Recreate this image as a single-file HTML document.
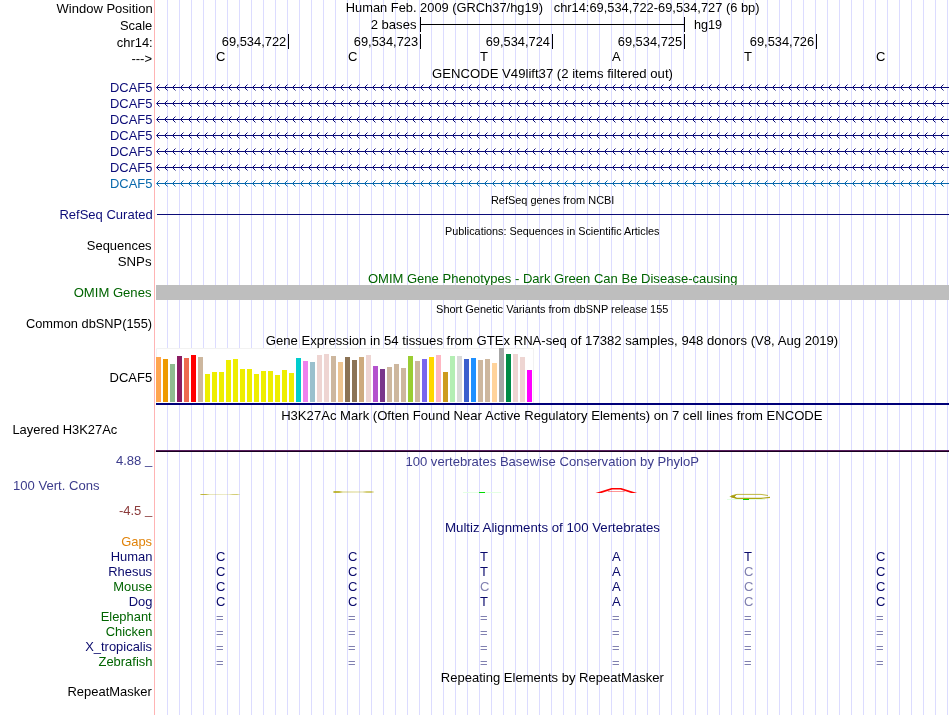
<!DOCTYPE html>
<html lang="en"><head><meta charset="utf-8"><title>UCSC Genome Browser chr14:69,534,722-69,534,727</title>
<style>
html,body{margin:0;padding:0;background:#fff;}
body{width:950px;height:715px;overflow:hidden;}
svg{display:block;font-family:"Liberation Sans", Arial, Helvetica, sans-serif;}
</style></head><body>
<div style="will-change:transform;width:950px;height:715px">
<svg width="950" height="715" viewBox="0 0 950 715">
<defs>
<pattern id="guides" x="167" y="0" width="12" height="715" patternUnits="userSpaceOnUse"><rect x="0" y="0" width="1" height="715" fill="#DCDCFF"/></pattern>
<pattern id="chev0" x="156" y="80" width="8" height="16" patternUnits="userSpaceOnUse"><path d="M3.5 4.5L0.5 7.5L3.5 10.5" fill="none" stroke="#0C0C78" stroke-width="1"/></pattern>
<pattern id="chev1" x="156" y="80" width="8" height="16" patternUnits="userSpaceOnUse"><path d="M3.5 4.5L0.5 7.5L3.5 10.5" fill="none" stroke="#0868AC" stroke-width="1"/></pattern>
<linearGradient id="cg" x1="0" x2="1" y1="0" y2="0"><stop offset="0" stop-color="#B4AA14" stop-opacity="0.3"/><stop offset="0.04" stop-color="#B4AA14" stop-opacity="0.85"/><stop offset="0.15" stop-color="#B4AA14" stop-opacity="0.8"/><stop offset="0.24" stop-color="#B4AA14" stop-opacity="0.3"/><stop offset="0.72" stop-color="#B4AA14" stop-opacity="0.22"/><stop offset="0.82" stop-color="#B4AA14" stop-opacity="0.55"/><stop offset="0.93" stop-color="#B4AA14" stop-opacity="0.6"/><stop offset="1" stop-color="#B4AA14" stop-opacity="0.15"/></linearGradient>
</defs>
<rect x="0" y="0" width="950" height="715" fill="#fff"/>
<rect x="167" y="0" width="783" height="715" fill="url(#guides)"/>
<rect x="154" y="0" width="1" height="715" fill="#FFB4B4"/>
<text x="56.54" y="13" text-anchor="start" fill="#000" font-size="13.58" textLength="96.2" lengthAdjust="spacingAndGlyphs">Window Position</text>
<text x="119.92" y="30" text-anchor="start" fill="#000" font-size="13.58" textLength="32.36" lengthAdjust="spacingAndGlyphs">Scale</text>
<text x="116.73" y="47" text-anchor="start" fill="#000" font-size="13.58" textLength="35.96" lengthAdjust="spacingAndGlyphs">chr14:</text>
<text x="152" y="63" text-anchor="end" fill="#000" font-size="13.58" textLength="20.59" lengthAdjust="spacingAndGlyphs">---&gt;</text>
<text x="345.83" y="12" text-anchor="start" fill="#000" font-size="13.58" textLength="413.67" lengthAdjust="spacingAndGlyphs" xml:space="preserve">Human Feb. 2009 (GRCh37/hg19)   chr14:69,534,722-69,534,727 (6 bp)</text>
<text x="370.65" y="29" text-anchor="start" fill="#000" font-size="13.58" textLength="45.82" lengthAdjust="spacingAndGlyphs">2 bases</text>
<text x="693.9" y="29" text-anchor="start" fill="#000" font-size="13.58" textLength="28.12" lengthAdjust="spacingAndGlyphs">hg19</text>
<rect x="420" y="17" width="1" height="15" fill="#000"/>
<rect x="684" y="17" width="1" height="15" fill="#000"/>
<rect x="420" y="24" width="265" height="1" fill="#000"/>
<rect x="288" y="34" width="1" height="15" fill="#000"/>
<text x="221.74" y="46" text-anchor="start" fill="#000" font-size="13.58" textLength="64.51" lengthAdjust="spacingAndGlyphs">69,534,722</text>
<rect x="420" y="34" width="1" height="15" fill="#000"/>
<text x="353.74" y="46" text-anchor="start" fill="#000" font-size="13.58" textLength="64.43" lengthAdjust="spacingAndGlyphs">69,534,723</text>
<rect x="552" y="34" width="1" height="15" fill="#000"/>
<text x="485.74" y="46" text-anchor="start" fill="#000" font-size="13.58" textLength="64.24" lengthAdjust="spacingAndGlyphs">69,534,724</text>
<rect x="684" y="34" width="1" height="15" fill="#000"/>
<text x="617.74" y="46" text-anchor="start" fill="#000" font-size="13.58" textLength="64.41" lengthAdjust="spacingAndGlyphs">69,534,725</text>
<rect x="816" y="34" width="1" height="15" fill="#000"/>
<text x="749.74" y="46" text-anchor="start" fill="#000" font-size="13.58" textLength="64.43" lengthAdjust="spacingAndGlyphs">69,534,726</text>
<text x="216" y="61" text-anchor="start" fill="#000" font-size="13.58" textLength="9.39" lengthAdjust="spacingAndGlyphs">C</text>
<text x="348" y="61" text-anchor="start" fill="#000" font-size="13.58" textLength="9.39" lengthAdjust="spacingAndGlyphs">C</text>
<text x="480" y="61" text-anchor="start" fill="#000" font-size="13.58" textLength="7.95" lengthAdjust="spacingAndGlyphs">T</text>
<text x="612" y="61" text-anchor="start" fill="#000" font-size="13.58" textLength="8.67" lengthAdjust="spacingAndGlyphs">A</text>
<text x="744" y="61" text-anchor="start" fill="#000" font-size="13.58" textLength="7.95" lengthAdjust="spacingAndGlyphs">T</text>
<text x="876" y="61" text-anchor="start" fill="#000" font-size="13.58" textLength="9.39" lengthAdjust="spacingAndGlyphs">C</text>
<text x="432.05" y="78" text-anchor="start" fill="#000" font-size="13.58" textLength="240.86" lengthAdjust="spacingAndGlyphs">GENCODE V49lift37 (2 items filtered out)</text>
<text x="109.98" y="92" text-anchor="start" fill="#0C0C78" font-size="13.58" textLength="42.36" lengthAdjust="spacingAndGlyphs">DCAF5</text>
<rect x="157" y="87" width="792" height="1" fill="#0C0C78"/>
<rect x="156" y="84" width="792" height="7" fill="url(#chev0)"/>
<text x="109.98" y="108" text-anchor="start" fill="#0C0C78" font-size="13.58" textLength="42.36" lengthAdjust="spacingAndGlyphs">DCAF5</text>
<rect x="157" y="103" width="792" height="1" fill="#0C0C78"/>
<rect x="156" y="100" width="792" height="7" fill="url(#chev0)"/>
<text x="109.98" y="124" text-anchor="start" fill="#0C0C78" font-size="13.58" textLength="42.36" lengthAdjust="spacingAndGlyphs">DCAF5</text>
<rect x="157" y="119" width="792" height="1" fill="#0C0C78"/>
<rect x="156" y="116" width="792" height="7" fill="url(#chev0)"/>
<text x="109.98" y="140" text-anchor="start" fill="#0C0C78" font-size="13.58" textLength="42.36" lengthAdjust="spacingAndGlyphs">DCAF5</text>
<rect x="157" y="135" width="792" height="1" fill="#0C0C78"/>
<rect x="156" y="132" width="792" height="7" fill="url(#chev0)"/>
<text x="109.98" y="156" text-anchor="start" fill="#0C0C78" font-size="13.58" textLength="42.36" lengthAdjust="spacingAndGlyphs">DCAF5</text>
<rect x="157" y="151" width="792" height="1" fill="#0C0C78"/>
<rect x="156" y="148" width="792" height="7" fill="url(#chev0)"/>
<text x="109.98" y="172" text-anchor="start" fill="#0C0C78" font-size="13.58" textLength="42.36" lengthAdjust="spacingAndGlyphs">DCAF5</text>
<rect x="157" y="167" width="792" height="1" fill="#0C0C78"/>
<rect x="156" y="164" width="792" height="7" fill="url(#chev0)"/>
<text x="109.98" y="188" text-anchor="start" fill="#0868AC" font-size="13.58" textLength="42.36" lengthAdjust="spacingAndGlyphs">DCAF5</text>
<rect x="157" y="183" width="792" height="1" fill="#0868AC"/>
<rect x="156" y="180" width="792" height="7" fill="url(#chev1)"/>
<text x="490.9" y="204" text-anchor="start" fill="#000" font-size="11.49" textLength="123.52" lengthAdjust="spacingAndGlyphs">RefSeq genes from NCBI</text>
<text x="59.43" y="219" text-anchor="start" fill="#0C0C78" font-size="13.58" textLength="93.3" lengthAdjust="spacingAndGlyphs">RefSeq Curated</text>
<rect x="157" y="214" width="792" height="1" fill="#0C0C78"/>
<text x="445.1" y="235" text-anchor="start" fill="#000" font-size="11.49" textLength="214.4" lengthAdjust="spacingAndGlyphs">Publications: Sequences in Scientific Articles</text>
<text x="86.81" y="250" text-anchor="start" fill="#000" font-size="13.58" textLength="64.76" lengthAdjust="spacingAndGlyphs">Sequences</text>
<text x="117.71" y="266" text-anchor="start" fill="#000" font-size="13.58" textLength="33.86" lengthAdjust="spacingAndGlyphs">SNPs</text>
<text x="367.88" y="283" text-anchor="start" fill="#006400" font-size="13.58" textLength="369.55" lengthAdjust="spacingAndGlyphs">OMIM Gene Phenotypes - Dark Green Can Be Disease-causing</text>
<text x="73.68" y="297" text-anchor="start" fill="#006400" font-size="13.58" textLength="77.79" lengthAdjust="spacingAndGlyphs">OMIM Genes</text>
<rect x="156" y="285" width="793" height="15" fill="#BEBEBE"/>
<text x="436.1" y="313" text-anchor="start" fill="#000" font-size="11.49" textLength="232.26" lengthAdjust="spacingAndGlyphs">Short Genetic Variants from dbSNP release 155</text>
<text x="25.94" y="328" text-anchor="start" fill="#000" font-size="13.58" textLength="126.17" lengthAdjust="spacingAndGlyphs">Common dbSNP(155)</text>
<text x="265.75" y="345" text-anchor="start" fill="#000" font-size="13.58" textLength="572.46" lengthAdjust="spacingAndGlyphs">Gene Expression in 54 tissues from GTEx RNA-seq of 17382 samples, 948 donors (V8, Aug 2019)</text>
<text x="109.53" y="382" text-anchor="start" fill="#000" font-size="13.58" textLength="42.61" lengthAdjust="spacingAndGlyphs">DCAF5</text>
<rect x="156" y="348" width="378" height="55" fill="#FFFFFF"/>
<path d="M156.5 403V348.5H533.5V403" fill="none" stroke="#F2F2F2" stroke-width="1"/>
<rect x="156" y="357" width="5" height="45" fill="#FFA54F"/>
<rect x="163" y="359" width="5" height="43" fill="#EE9A00"/>
<rect x="170" y="364" width="5" height="38" fill="#8FBC8F"/>
<rect x="177" y="356" width="5" height="46" fill="#8B1C62"/>
<rect x="184" y="358" width="5" height="44" fill="#EE6A50"/>
<rect x="191" y="355" width="5" height="47" fill="#FF0000"/>
<rect x="198" y="357" width="5" height="45" fill="#CDB79E"/>
<rect x="205" y="374" width="5" height="28" fill="#EEEE00"/>
<rect x="212" y="372" width="5" height="30" fill="#EEEE00"/>
<rect x="219" y="372" width="5" height="30" fill="#EEEE00"/>
<rect x="226" y="360" width="5" height="42" fill="#EEEE00"/>
<rect x="233" y="359" width="5" height="43" fill="#EEEE00"/>
<rect x="240" y="369" width="5" height="33" fill="#EEEE00"/>
<rect x="247" y="369" width="5" height="33" fill="#EEEE00"/>
<rect x="254" y="374" width="5" height="28" fill="#EEEE00"/>
<rect x="261" y="371" width="5" height="31" fill="#EEEE00"/>
<rect x="268" y="371" width="5" height="31" fill="#EEEE00"/>
<rect x="275" y="375" width="5" height="27" fill="#EEEE00"/>
<rect x="282" y="370" width="5" height="32" fill="#EEEE00"/>
<rect x="289" y="373" width="5" height="29" fill="#EEEE00"/>
<rect x="296" y="358" width="5" height="44" fill="#00CDCD"/>
<rect x="303" y="361" width="5" height="41" fill="#EE82EE"/>
<rect x="310" y="362" width="5" height="40" fill="#9AC0CD"/>
<rect x="317" y="355" width="5" height="47" fill="#EED5D2"/>
<rect x="324" y="354" width="5" height="48" fill="#EED5D2"/>
<rect x="331" y="356" width="5" height="46" fill="#CDB79E"/>
<rect x="338" y="362" width="5" height="40" fill="#EEC591"/>
<rect x="345" y="357" width="5" height="45" fill="#8B7355"/>
<rect x="352" y="360" width="5" height="42" fill="#8B7355"/>
<rect x="359" y="357" width="5" height="45" fill="#CDAA7D"/>
<rect x="366" y="355" width="5" height="47" fill="#EED5D2"/>
<rect x="373" y="366" width="5" height="36" fill="#B452CD"/>
<rect x="380" y="369" width="5" height="33" fill="#7A378B"/>
<rect x="387" y="367" width="5" height="35" fill="#CDB79E"/>
<rect x="394" y="364" width="5" height="38" fill="#CDB79E"/>
<rect x="401" y="368" width="5" height="34" fill="#CDB79E"/>
<rect x="408" y="356" width="5" height="46" fill="#9ACD32"/>
<rect x="415" y="361" width="5" height="41" fill="#CDB79E"/>
<rect x="422" y="359" width="5" height="43" fill="#7A67EE"/>
<rect x="429" y="357" width="5" height="45" fill="#FFD700"/>
<rect x="436" y="355" width="5" height="47" fill="#FFB6C1"/>
<rect x="443" y="372" width="5" height="30" fill="#CD9B1D"/>
<rect x="450" y="356" width="5" height="46" fill="#B4EEB4"/>
<rect x="457" y="356" width="5" height="46" fill="#D9D9D9"/>
<rect x="464" y="359" width="5" height="43" fill="#3A5FCD"/>
<rect x="471" y="358" width="5" height="44" fill="#1E90FF"/>
<rect x="478" y="360" width="5" height="42" fill="#CDB79E"/>
<rect x="485" y="359" width="5" height="43" fill="#CDB79E"/>
<rect x="492" y="363" width="5" height="39" fill="#FFD39B"/>
<rect x="499" y="348" width="5" height="54" fill="#A6A6A6"/>
<rect x="506" y="354" width="5" height="48" fill="#008B45"/>
<rect x="513" y="354" width="5" height="48" fill="#EED5D2"/>
<rect x="520" y="357" width="5" height="45" fill="#EED5D2"/>
<rect x="527" y="370" width="5" height="32" fill="#FF00FF"/>
<rect x="156" y="403" width="793" height="2" fill="#000078"/>
<text x="281.13" y="420" text-anchor="start" fill="#000" font-size="13.58" textLength="541.42" lengthAdjust="spacingAndGlyphs">H3K27Ac Mark (Often Found Near Active Regulatory Elements) on 7 cell lines from ENCODE</text>
<text x="12.43" y="434" text-anchor="start" fill="#000" font-size="13.58" textLength="104.91" lengthAdjust="spacingAndGlyphs">Layered H3K27Ac</text>
<rect x="156" y="450" width="793" height="1" fill="#5A1E5E"/>
<rect x="156" y="451" width="793" height="1" fill="#180020"/>
<text x="405.41" y="466" text-anchor="start" fill="#3C3C8C" font-size="13.58" textLength="293.58" lengthAdjust="spacingAndGlyphs">100 vertebrates Basewise Conservation by PhyloP</text>
<text x="115.9" y="465" text-anchor="start" fill="#3C3C8C" font-size="13.58" textLength="36.35" lengthAdjust="spacingAndGlyphs">4.88 <tspan dy="-1">_</tspan></text>
<text x="13.01" y="490" text-anchor="start" fill="#3C3C8C" font-size="13.58" textLength="86.46" lengthAdjust="spacingAndGlyphs">100 Vert. Cons</text>
<text x="118.92" y="515" text-anchor="start" fill="#8C3C3C" font-size="13.58" textLength="33.33" lengthAdjust="spacingAndGlyphs">-4.5 <tspan dy="-1">_</tspan></text>
<rect x="200" y="494" width="40" height="1" fill="url(#cg)"/>
<rect x="333" y="491" width="41" height="2" fill="url(#cg)"/>
<rect x="463" y="492" width="38" height="1" fill="#E4FFE4"/>
<rect x="479" y="492" width="6" height="1" fill="#00DC00"/>
<path d="M595.5 493 L611.5 487.9 H621.1 L637.1 493 H631.1 L620.4 489.6 H612.2 L601.5 493 Z" fill="#FF0000"/>
<rect x="607.8" y="491" width="17" height="0.75" fill="#FF0000" opacity="0.55"/>
<path d="M768 495.5 L761 494.4 H737 L731 496" stroke="#B0A614" stroke-width="1" fill="none" opacity="0.8"/>
<path d="M731 496.6 L737 498.4 H761 L770 497.4" stroke="#B0A614" stroke-width="1.1" fill="none"/>
<path d="M729.3 496.4 L737 494.2 L734.8 496.4 L737 498.8 Z" fill="#A89E10"/>
<rect x="727" y="499" width="38" height="1" fill="#E4FFE4"/>
<rect x="743" y="499" width="6" height="1" fill="#00DC00"/>
<text x="445.03" y="532" text-anchor="start" fill="#0A0A6C" font-size="13.58" textLength="214.94" lengthAdjust="spacingAndGlyphs">Multiz Alignments of 100 Vertebrates</text>
<text x="121.15" y="546" text-anchor="start" fill="#E08208" font-size="13.58" textLength="30.92" lengthAdjust="spacingAndGlyphs">Gaps</text>
<text x="110.74" y="561" text-anchor="start" fill="#0A0A6C" font-size="13.58" textLength="41.71" lengthAdjust="spacingAndGlyphs">Human</text>
<text x="108.2" y="576" text-anchor="start" fill="#0A0A6C" font-size="13.58" textLength="43.87" lengthAdjust="spacingAndGlyphs">Rhesus</text>
<text x="113.35" y="591" text-anchor="start" fill="#006400" font-size="13.58" textLength="38.83" lengthAdjust="spacingAndGlyphs">Mouse</text>
<text x="128.7" y="606" text-anchor="start" fill="#0A0A6C" font-size="13.58" textLength="23.74" lengthAdjust="spacingAndGlyphs">Dog</text>
<text x="100.63" y="621" text-anchor="start" fill="#006400" font-size="13.58" textLength="51.07" lengthAdjust="spacingAndGlyphs">Elephant</text>
<text x="105.71" y="636" text-anchor="start" fill="#006400" font-size="13.58" textLength="46.74" lengthAdjust="spacingAndGlyphs">Chicken</text>
<text x="85.21" y="651" text-anchor="start" fill="#0A0A6C" font-size="13.58" textLength="66.86" lengthAdjust="spacingAndGlyphs">X_tropicalis</text>
<text x="98.52" y="666" text-anchor="start" fill="#006400" font-size="13.58" textLength="53.93" lengthAdjust="spacingAndGlyphs">Zebrafish</text>
<text x="216" y="561" text-anchor="start" fill="#0A0A6C" font-size="13.58" textLength="9.39" lengthAdjust="spacingAndGlyphs">C</text>
<text x="348" y="561" text-anchor="start" fill="#0A0A6C" font-size="13.58" textLength="9.39" lengthAdjust="spacingAndGlyphs">C</text>
<text x="480" y="561" text-anchor="start" fill="#0A0A6C" font-size="13.58" textLength="7.95" lengthAdjust="spacingAndGlyphs">T</text>
<text x="612" y="561" text-anchor="start" fill="#0A0A6C" font-size="13.58" textLength="8.67" lengthAdjust="spacingAndGlyphs">A</text>
<text x="744" y="561" text-anchor="start" fill="#0A0A6C" font-size="13.58" textLength="7.95" lengthAdjust="spacingAndGlyphs">T</text>
<text x="876" y="561" text-anchor="start" fill="#0A0A6C" font-size="13.58" textLength="9.39" lengthAdjust="spacingAndGlyphs">C</text>
<text x="216" y="576" text-anchor="start" fill="#0A0A6C" font-size="13.58" textLength="9.39" lengthAdjust="spacingAndGlyphs">C</text>
<text x="348" y="576" text-anchor="start" fill="#0A0A6C" font-size="13.58" textLength="9.39" lengthAdjust="spacingAndGlyphs">C</text>
<text x="480" y="576" text-anchor="start" fill="#0A0A6C" font-size="13.58" textLength="7.95" lengthAdjust="spacingAndGlyphs">T</text>
<text x="612" y="576" text-anchor="start" fill="#0A0A6C" font-size="13.58" textLength="8.67" lengthAdjust="spacingAndGlyphs">A</text>
<text x="744" y="576" text-anchor="start" fill="#8080B0" font-size="13.58" textLength="9.39" lengthAdjust="spacingAndGlyphs">C</text>
<text x="876" y="576" text-anchor="start" fill="#0A0A6C" font-size="13.58" textLength="9.39" lengthAdjust="spacingAndGlyphs">C</text>
<text x="216" y="591" text-anchor="start" fill="#0A0A6C" font-size="13.58" textLength="9.39" lengthAdjust="spacingAndGlyphs">C</text>
<text x="348" y="591" text-anchor="start" fill="#0A0A6C" font-size="13.58" textLength="9.39" lengthAdjust="spacingAndGlyphs">C</text>
<text x="480" y="591" text-anchor="start" fill="#8080B0" font-size="13.58" textLength="9.39" lengthAdjust="spacingAndGlyphs">C</text>
<text x="612" y="591" text-anchor="start" fill="#0A0A6C" font-size="13.58" textLength="8.67" lengthAdjust="spacingAndGlyphs">A</text>
<text x="744" y="591" text-anchor="start" fill="#8080B0" font-size="13.58" textLength="9.39" lengthAdjust="spacingAndGlyphs">C</text>
<text x="876" y="591" text-anchor="start" fill="#0A0A6C" font-size="13.58" textLength="9.39" lengthAdjust="spacingAndGlyphs">C</text>
<text x="216" y="606" text-anchor="start" fill="#0A0A6C" font-size="13.58" textLength="9.39" lengthAdjust="spacingAndGlyphs">C</text>
<text x="348" y="606" text-anchor="start" fill="#0A0A6C" font-size="13.58" textLength="9.39" lengthAdjust="spacingAndGlyphs">C</text>
<text x="480" y="606" text-anchor="start" fill="#0A0A6C" font-size="13.58" textLength="7.95" lengthAdjust="spacingAndGlyphs">T</text>
<text x="612" y="606" text-anchor="start" fill="#0A0A6C" font-size="13.58" textLength="8.67" lengthAdjust="spacingAndGlyphs">A</text>
<text x="744" y="606" text-anchor="start" fill="#8080B0" font-size="13.58" textLength="9.39" lengthAdjust="spacingAndGlyphs">C</text>
<text x="876" y="606" text-anchor="start" fill="#0A0A6C" font-size="13.58" textLength="9.39" lengthAdjust="spacingAndGlyphs">C</text>
<text x="216" y="622" text-anchor="start" fill="#8080B0" font-size="13.58" textLength="7.59" lengthAdjust="spacingAndGlyphs">=</text>
<text x="348" y="622" text-anchor="start" fill="#8080B0" font-size="13.58" textLength="7.59" lengthAdjust="spacingAndGlyphs">=</text>
<text x="480" y="622" text-anchor="start" fill="#8080B0" font-size="13.58" textLength="7.59" lengthAdjust="spacingAndGlyphs">=</text>
<text x="612" y="622" text-anchor="start" fill="#8080B0" font-size="13.58" textLength="7.59" lengthAdjust="spacingAndGlyphs">=</text>
<text x="744" y="622" text-anchor="start" fill="#8080B0" font-size="13.58" textLength="7.59" lengthAdjust="spacingAndGlyphs">=</text>
<text x="876" y="622" text-anchor="start" fill="#8080B0" font-size="13.58" textLength="7.59" lengthAdjust="spacingAndGlyphs">=</text>
<text x="216" y="637" text-anchor="start" fill="#8080B0" font-size="13.58" textLength="7.59" lengthAdjust="spacingAndGlyphs">=</text>
<text x="348" y="637" text-anchor="start" fill="#8080B0" font-size="13.58" textLength="7.59" lengthAdjust="spacingAndGlyphs">=</text>
<text x="480" y="637" text-anchor="start" fill="#8080B0" font-size="13.58" textLength="7.59" lengthAdjust="spacingAndGlyphs">=</text>
<text x="612" y="637" text-anchor="start" fill="#8080B0" font-size="13.58" textLength="7.59" lengthAdjust="spacingAndGlyphs">=</text>
<text x="744" y="637" text-anchor="start" fill="#8080B0" font-size="13.58" textLength="7.59" lengthAdjust="spacingAndGlyphs">=</text>
<text x="876" y="637" text-anchor="start" fill="#8080B0" font-size="13.58" textLength="7.59" lengthAdjust="spacingAndGlyphs">=</text>
<text x="216" y="652" text-anchor="start" fill="#8080B0" font-size="13.58" textLength="7.59" lengthAdjust="spacingAndGlyphs">=</text>
<text x="348" y="652" text-anchor="start" fill="#8080B0" font-size="13.58" textLength="7.59" lengthAdjust="spacingAndGlyphs">=</text>
<text x="480" y="652" text-anchor="start" fill="#8080B0" font-size="13.58" textLength="7.59" lengthAdjust="spacingAndGlyphs">=</text>
<text x="612" y="652" text-anchor="start" fill="#8080B0" font-size="13.58" textLength="7.59" lengthAdjust="spacingAndGlyphs">=</text>
<text x="744" y="652" text-anchor="start" fill="#8080B0" font-size="13.58" textLength="7.59" lengthAdjust="spacingAndGlyphs">=</text>
<text x="876" y="652" text-anchor="start" fill="#8080B0" font-size="13.58" textLength="7.59" lengthAdjust="spacingAndGlyphs">=</text>
<text x="216" y="667" text-anchor="start" fill="#8080B0" font-size="13.58" textLength="7.59" lengthAdjust="spacingAndGlyphs">=</text>
<text x="348" y="667" text-anchor="start" fill="#8080B0" font-size="13.58" textLength="7.59" lengthAdjust="spacingAndGlyphs">=</text>
<text x="480" y="667" text-anchor="start" fill="#8080B0" font-size="13.58" textLength="7.59" lengthAdjust="spacingAndGlyphs">=</text>
<text x="612" y="667" text-anchor="start" fill="#8080B0" font-size="13.58" textLength="7.59" lengthAdjust="spacingAndGlyphs">=</text>
<text x="744" y="667" text-anchor="start" fill="#8080B0" font-size="13.58" textLength="7.59" lengthAdjust="spacingAndGlyphs">=</text>
<text x="876" y="667" text-anchor="start" fill="#8080B0" font-size="13.58" textLength="7.59" lengthAdjust="spacingAndGlyphs">=</text>
<text x="440.83" y="682" text-anchor="start" fill="#000" font-size="13.58" textLength="222.98" lengthAdjust="spacingAndGlyphs">Repeating Elements by RepeatMasker</text>
<text x="67.53" y="696" text-anchor="start" fill="#000" font-size="13.58" textLength="84.28" lengthAdjust="spacingAndGlyphs">RepeatMasker</text>
</svg>
</div>
</body></html>
